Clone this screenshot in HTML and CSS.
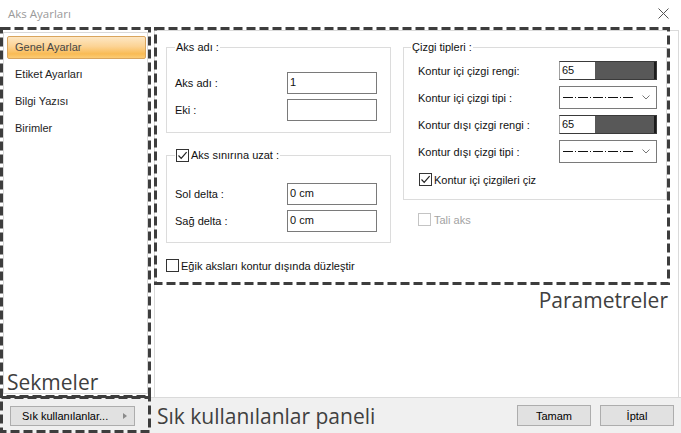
FILE: index.html
```html
<!DOCTYPE html>
<html lang="tr">
<head>
    <meta charset="UTF-8">
    <meta name="viewport" content="width=device-width, initial-scale=1.0">
    <title>Aks Ayarları</title>
    <link rel="stylesheet" href="styles.css">
</head>
<body>
    <div class="dialog">
        <div class="titlebar">
            <span class="title">Aks Ayarları</span>
            <svg class="close-icon" width="11" height="11" viewBox="0 0 11 11">
                <path d="M0.5 0.5 L10.5 10.5 M10.5 0.5 L0.5 10.5" stroke="#555" stroke-width="1" fill="none"/>
            </svg>
        </div>

        <div class="main">
            <!-- left tab list -->
            <ul class="tabs">
                <li class="tab active">Genel Ayarlar</li>
                <li class="tab">Etiket Ayarları</li>
                <li class="tab">Bilgi Yazısı</li>
                <li class="tab">Birimler</li>
            </ul>

            <!-- parameter panel -->
            <div class="params">
                <div class="col col-left">
                    <fieldset class="group group-name">
                        <legend>Aks adı :</legend>
                        <div class="field"><label>Aks adı :</label><div class="input">1</div></div>
                        <div class="field"><label>Eki :</label><div class="input"></div></div>
                    </fieldset>

                    <fieldset class="group group-extend">
                        <legend class="check-legend">
                            <span class="checkbox checked">
                                <svg width="11" height="11" viewBox="0 0 11 11"><path d="M1.5 5.5 L4.2 8.3 L9.6 2.2" stroke="#222" stroke-width="1.2" fill="none"/></svg>
                            </span>Aks sınırına uzat :
                        </legend>
                        <div class="field"><label>Sol delta :</label><div class="input">0 cm</div></div>
                        <div class="field"><label>Sağ delta :</label><div class="input">0 cm</div></div>
                    </fieldset>

                    <div class="check-row flatten">
                        <span class="checkbox"></span>Eğik aksları kontur dışında düzleştir
                    </div>
                </div>

                <div class="col col-right">
                    <fieldset class="group group-lines">
                        <legend>Çizgi tipleri :</legend>
                        <div class="line-row">
                            <span>Kontur içi çizgi rengi:</span>
                            <div class="color-box"><span class="color-value">65</span><span class="color-swatch"></span></div>
                        </div>
                        <div class="line-row">
                            <span>Kontur içi çizgi tipi :</span>
                            <div class="line-select">
                                <svg width="71" height="3" viewBox="0 0 71 3"><line x1="0" y1="1.5" x2="71" y2="1.5" stroke="#111" stroke-width="1" stroke-dasharray="10 2 1 2"/></svg>
                                <svg class="chevron" width="8" height="5" viewBox="0 0 8 5"><path d="M0.5 0.5 L4 4 L7.5 0.5" stroke="#777" fill="none"/></svg>
                            </div>
                        </div>
                        <div class="line-row">
                            <span>Kontur dışı çizgi rengi :</span>
                            <div class="color-box"><span class="color-value">65</span><span class="color-swatch"></span></div>
                        </div>
                        <div class="line-row">
                            <span>Kontur dışı çizgi tipi :</span>
                            <div class="line-select">
                                <svg width="71" height="3" viewBox="0 0 71 3"><line x1="0" y1="1.5" x2="71" y2="1.5" stroke="#111" stroke-width="1" stroke-dasharray="10 2 1 2"/></svg>
                                <svg class="chevron" width="8" height="5" viewBox="0 0 8 5"><path d="M0.5 0.5 L4 4 L7.5 0.5" stroke="#777" fill="none"/></svg>
                            </div>
                        </div>
                        <div class="check-row inner-lines">
                            <span class="checkbox checked">
                                <svg width="11" height="11" viewBox="0 0 11 11"><path d="M1.5 5.5 L4.2 8.3 L9.6 2.2" stroke="#222" stroke-width="1.2" fill="none"/></svg>
                            </span>Kontur içi çizgileri çiz
                        </div>
                    </fieldset>

                    <div class="check-row disabled secondary">
                        <span class="checkbox"></span>Tali aks
                    </div>
                </div>
            </div>
        </div>

        <div class="footer">
            <button class="btn fav-btn">Sık kullanılanlar... <span class="arrow"></span></button>
            <div class="footer-actions">
                <button class="btn">Tamam</button>
                <button class="btn">İptal</button>
            </div>
        </div>

        <!-- annotation overlays -->
        <svg class="note-box note-tabs" width="151" height="371">
            <rect x="1.5" y="1.5" width="148" height="368" fill="none" stroke="#3d3d3d" stroke-width="3" stroke-dasharray="9 4"/>
        </svg>
        <svg class="note-box note-params" width="516" height="258">
            <rect x="1.5" y="1.5" width="513" height="255" fill="none" stroke="#3d3d3d" stroke-width="3" stroke-dasharray="9 4"/>
        </svg>
        <svg class="note-box note-fav" width="151" height="37">
            <rect x="1.5" y="1.5" width="148" height="34" fill="none" stroke="#3d3d3d" stroke-width="3" stroke-dasharray="9 4"/>
        </svg>
        <span class="note-label label-tabs">Sekmeler</span>
        <span class="note-label label-params">Parametreler</span>
        <span class="note-label label-fav">Sık kullanılanlar paneli</span>
    </div>
</body>
</html>
```

FILE: styles.css
```css
body {
    margin: 0;
    background: #fff;
}

.dialog {
    position: relative;
    width: 681px;
    height: 433px;
    background: #fff;
    font-family: 'Liberation Sans', Arial, sans-serif;
    font-size: 11px;
    color: #111;
    overflow: hidden;
}

/* Title bar */
.titlebar {
    height: 27px;
    display: flex;
    align-items: center;
    justify-content: space-between;
    padding: 0 12px 0 8px;
    box-sizing: border-box;
}
.title {
    font-family: 'Open Sans', sans-serif;
    font-size: 11.5px;
    color: #9a9a9a;
}

.main {
    display: flex;
    height: 371px;
    border-bottom: 1px solid #dadada;
    box-sizing: border-box;
}

/* Tabs */
.tabs {
    list-style: none;
    margin: 5px 0 3px 3px;
    padding: 3px 1px 3px 3px;
    width: 145px;
    border: 1px solid #d9d9d9;
    box-sizing: border-box;
}
.tab {
    height: 23px;
    line-height: 21px;
    margin-bottom: 4px;
    padding-left: 7px;
    border: 1px solid transparent;
    box-sizing: border-box;
    color: #1e1e1e;
}
.tab.active {
    background: linear-gradient(to bottom, #fde7c4 0%, #fcd394 45%, #f9bb55 80%, #fbcb74 100%);
    border-color: #d9a55e;
    border-radius: 2px;
    color: #474747;
}

/* Parameter panel */
.params {
    flex: 1;
    display: flex;
    gap: 12px;
    margin: 3px 2px 0 6px;
    padding: 9px 11px 0 11px;
    border: 1px solid #dadada;
    border-bottom: none;
}
.col-left {
    width: 225px;
}
.col-right {
    width: 264px;
}

.group {
    margin: 0;
    border: 1px solid #dcdcdc;
    min-width: 0;
}
.group legend {
    padding: 0 1px;
    line-height: 14px;
    height: 14px;
}
.group-name {
    padding: 18px 8px 11px 8px;
}
.group-extend {
    margin-top: 15px;
    padding: 21px 8px 10px 8px;
}
.check-legend {
    display: flex;
    align-items: center;
}
.check-legend .checkbox {
    margin-right: 2px;
}

.field {
    display: flex;
    align-items: center;
    height: 22px;
}
.field + .field {
    margin-top: 5px;
}
.field label {
    width: 112px;
}
.input {
    width: 90px;
    height: 22px;
    border: 1px solid #7a7a7a;
    box-sizing: border-box;
    padding: 0 2px;
    line-height: 18px;
    font-size: 11px;
    background: #fff;
}

.checkbox {
    display: inline-flex;
    align-items: center;
    justify-content: center;
    width: 13px;
    height: 13px;
    border: 1px solid #333;
    box-sizing: border-box;
    background: #fff;
    flex-shrink: 0;
}
.check-row {
    display: flex;
    align-items: center;
    height: 15px;
}
.check-row .checkbox {
    margin-right: 2px;
}
.flatten {
    margin-top: 15px;
}

.group-lines {
    padding: 3px 9px 12px 14px;
}
.group-lines legend {
    margin-left: -7px;
}
.line-row {
    display: flex;
    align-items: center;
    justify-content: space-between;
    height: 27px;
}
.color-box {
    display: flex;
    width: 98px;
    height: 19px;
    border: 1px solid #3a3a3a;
    border-left-color: #a0a0a0;
    box-sizing: border-box;
}
.color-value {
    width: 33px;
    padding-left: 2px;
    line-height: 17px;
    font-size: 11px;
    background: #fff;
}
.color-swatch {
    flex: 1;
    background: #585858;
    border-right: 2px solid #1c1c1c;
}
.line-select {
    display: flex;
    align-items: center;
    justify-content: space-between;
    width: 98px;
    height: 23px;
    padding: 0 6px 0 3px;
    border: 1px solid #7a7a7a;
    box-sizing: border-box;
    background: #fff;
}
.inner-lines {
    margin-top: 7px;
    margin-left: 1px;
}
.secondary {
    margin-top: 12px;
    margin-left: 15px;
}
.check-row.secondary .checkbox {
    margin-right: 3px;
}
.disabled {
    color: #a3a3a3;
}
.disabled .checkbox {
    border-color: #c4c4c4;
}

/* Footer */
.footer {
    display: flex;
    align-items: center;
    height: 35px;
    padding: 0 7px 0 10px;
    background: #f0f0f0;
}
.btn {
    height: 21px;
    border: 1px solid #adadad;
    background: #e1e1e1;
    font-family: 'Liberation Sans', Arial, sans-serif;
    font-size: 11px;
    color: #000;
    padding: 0;
}
.fav-btn {
    display: flex;
    align-items: center;
    justify-content: space-between;
    width: 125px;
    height: 20px;
    padding: 0 7px 0 11px;
    text-align: left;
}
.arrow {
    width: 0;
    height: 0;
    border-top: 3.5px solid transparent;
    border-bottom: 3.5px solid transparent;
    border-left: 4px solid #8a8a8a;
}
.footer-actions {
    display: flex;
    gap: 9px;
    margin-left: auto;
}
.footer-actions .btn {
    width: 74px;
}

/* Annotation overlays */
.note-box {
    position: absolute;
}
.note-tabs {
    left: 0;
    top: 27px;
}
.note-params {
    left: 154px;
    top: 27px;
}
.note-fav {
    left: 0;
    top: 396px;
}
.note-label {
    position: absolute;
    font-family: 'Open Sans', sans-serif;
    font-size: 21px;
    line-height: 28px;
    color: #404040;
}
.label-tabs {
    left: 7px;
    top: 368px;
}
.label-params {
    right: 13px;
    top: 286px;
}
.label-fav {
    left: 157px;
    top: 402px;
}
```
